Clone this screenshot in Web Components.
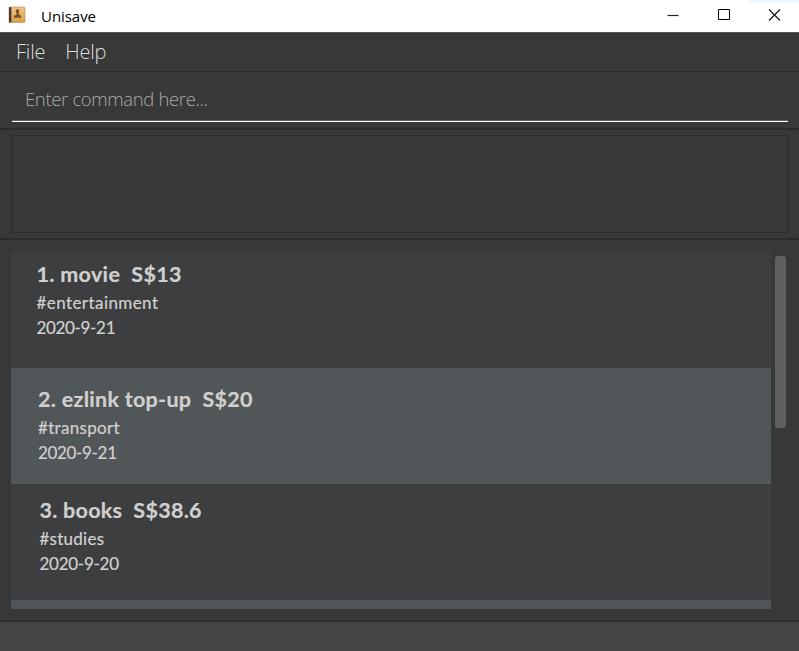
<!DOCTYPE html>
<html lang="en"><head><meta charset="utf-8"><title>Unisave</title>
<style>html,body{margin:0;height:100%;overflow:hidden;background:#383838}</style></head>
<body>
<unisave-app></unisave-app>
<script>
const define=(name,html,ready)=>customElements.define(name,class extends HTMLElement{
  connectedCallback(){
    if(this.shadowRoot)return;
    this.attachShadow({mode:'open'}).innerHTML=html;
    if(ready)ready(this,this.shadowRoot);
  }
});

// One line of text, tracked so that it spans the number of pixels in "span".
define('tracked-text',`<style>:host{display:block;white-space:pre}span{display:inline-block}</style><span><slot></slot></span>`,(el,root)=>{
  const s=root.querySelector('span');
  s.style.letterSpacing='0px';
  const n=el.textContent.length;
  s.style.letterSpacing=((+el.getAttribute('span')-s.getBoundingClientRect().width)/(n-1)).toFixed(3)+'px';
});

define('window-bar',`<style>
:host{display:flex;height:32px;color:#000;align-items:center;font:15px/32px "Open Sans",sans-serif;background:linear-gradient(#f0f8fe,#f0f8fe) 749px 0/50px 3px no-repeat #fff}
.logo{margin:-2px 15px 0 8px;width:18px;height:18px}
svg{display:block}
.title{flex:1}
.controls{display:flex;margin-top:-3px;padding-right:18px;gap:38px}
</style>
<svg class="logo" viewBox="0 0 18 18"><defs><linearGradient id="g" x2="0" y2="1"><stop stop-color="#f0c685"/><stop offset="1" stop-color="#d99f47"/></linearGradient></defs>
<rect x="1" y="1" width="16" height="15.5" rx="1" fill="url(#g)" stroke="#b08a55" stroke-width=".6"/><rect x="1" y="1" width="2.4" height="15.5" rx=".8" fill="#4a3b3b"/><path d="M8.1 5.7a1.7 1.7 0 1 1 3 0c0 1-.5 1.6-.5 2.9l2.5 1.2v2H6v-2l2.6-1.2c0-1.3-.5-1.9-.5-2.9z" fill="#725126"/></svg>
<tracked-text class="title" span="55">Unisave</tracked-text>
<div class="controls">
<svg width="13" height="13" viewBox="0 0 13 13"><path d="M1.5 7.5h11" stroke="#222" stroke-width="1.2"/></svg>
<svg width="13" height="13" viewBox="0 0 13 13"><path d="M1.5 1.5h11v10h-11z" fill="none" stroke="#000"/></svg>
<svg width="13" height="13" viewBox="0 0 13 13"><path d="M1 1.5l11 11M12 1.5L1 12.5" stroke="#111" stroke-width="1.1"/></svg>
</div>`);

define('menu-bar',`<style>
:host{display:flex;box-sizing:border-box;height:40px;padding-left:16px;gap:20px;border-top:1px solid #5a5a5a;border-bottom:1px solid #292929;background:#383838;color:#dedede;font:300 20px/38px "Open Sans",sans-serif}
</style><tracked-text span="29.5">File</tracked-text><tracked-text span="41">Help</tracked-text>`);

define('command-box',`<style>
:host{display:block;box-sizing:border-box;height:58px;padding:6px 11px 0 12px;border-bottom:2px solid #2b2b2b}
div{box-sizing:border-box;height:44px;padding-left:13px;border-bottom:1px solid #fff;box-shadow:inset 0 -1px #606060;font:300 18.5px/42px "Open Sans",sans-serif;color:#aaa}
</style><div><tracked-text span="183">Enter command here...</tracked-text></div>`);

define('result-display',`<style>
:host{display:block;box-sizing:border-box;height:110px;padding:5px 11px;border-bottom:2px solid #2b2b2b}
div{box-sizing:border-box;height:98px;border:1px solid #292929}
</style><div></div>`);

define('expense-card',`<style>
:host{display:block;box-sizing:border-box;flex:none;background:#3c3e3f;color:#d2d0cf;font:17px/25px Lato,sans-serif;-webkit-text-stroke:.2px #d2d0cf}
.name{font-size:21.5px;font-weight:700;line-height:29px;margin-bottom:1px}
</style><div class="name"><slot name="name"></slot></div><slot name="tag"></slot><slot name="date"></slot>`);

define('expense-list',`<style>
:host{display:flex;box-sizing:border-box;height:382px;padding:11px 13px 11px 11px;gap:4px;border-bottom:2px solid #2d2d2d}
.rows{width:760px;height:358px;overflow:hidden;display:flex;flex-direction:column}
expense-card{height:116px}
.a{height:117px;padding:9px 25.5px}.b{padding:17px 27px}.c{padding:12px 28.5px}
.b,.d{background:#515658}
.thumb{width:11px;height:172px;margin-top:5px;border-radius:3px;background:#606060}
</style><div class="rows">
<expense-card class="a"><tracked-text slot="name" span="145">1. movie  S$13</tracked-text><tracked-text slot="tag" span="121.5">#entertainment</tracked-text><tracked-text slot="date" span="79">2020-9-21</tracked-text></expense-card>
<expense-card class="b"><tracked-text slot="name" span="214.5">2. ezlink top-up  S$20</tracked-text><tracked-text slot="tag" span="81.5">#transport</tracked-text><tracked-text slot="date" span="79">2020-9-21</tracked-text></expense-card>
<expense-card class="c"><tracked-text slot="name" span="162">3. books  S$38.6</tracked-text><tracked-text slot="tag" span="64.5">#studies</tracked-text><tracked-text slot="date" span="79.5">2020-9-20</tracked-text></expense-card>
<expense-card class="d"></expense-card>
</div><div class="thumb"></div>`);

define('status-bar',`<style>:host{display:block;flex:1;background:#444}</style>`);

define('unisave-app',`<style>:host{display:flex;flex-direction:column;width:799px;height:651px;background:#383838}</style>
<window-bar></window-bar><menu-bar></menu-bar><command-box></command-box><result-display></result-display><expense-list></expense-list><status-bar></status-bar>`);
</script>
</body></html>
